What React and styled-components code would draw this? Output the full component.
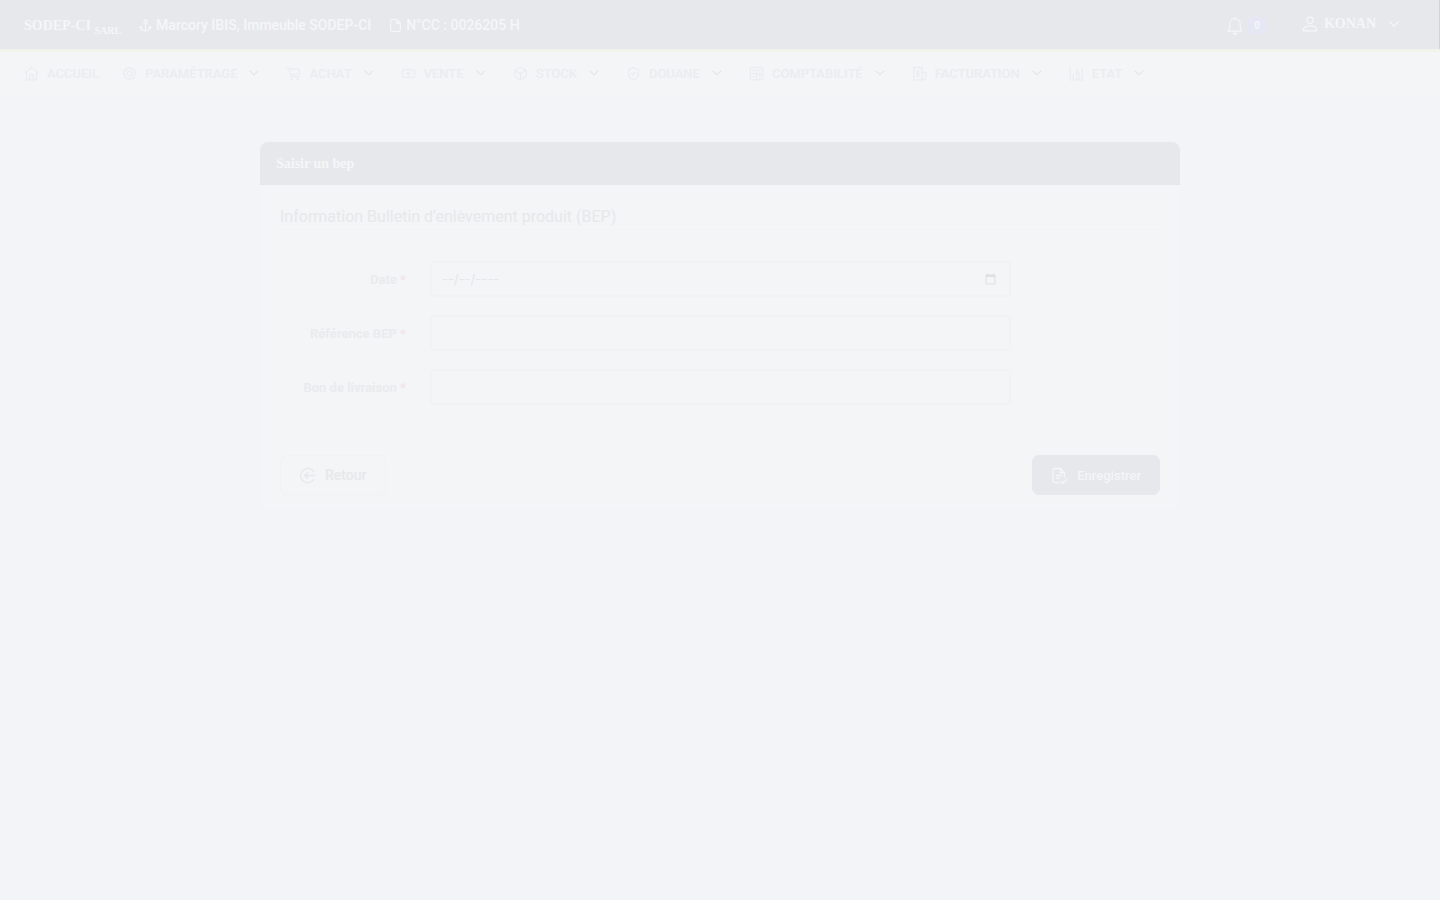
import React from "react";
import styled, { createGlobalStyle } from "styled-components";
import { BsBell, BsPerson, BsChevronDown } from "react-icons/bs";
import { Banknote, Box, ShieldCheck } from "lucide-react";

const GlobalStyle = createGlobalStyle`
  * {
    box-sizing: border-box;
  }

  body {
    margin: 0;
    background: #f2f4f8;
    color: #e9eaed;
    font-family: Roboto, "Noto Sans", sans-serif;
    font-size: 13px;
  }
`;

function HomeIcon() {
  return (
    <Glyph viewBox="0 0 24 24">
      <path d="M1 11 12 2l11 9M4 9v13h16V9M9 22v-6a3 3 0 0 1 6 0v6" />
    </Glyph>
  );
}

function GearIcon() {
  return (
    <Glyph viewBox="0 0 24 24">
      <path d="M12 2l3 2 4 1 1 4 2 3-2 3-1 4-4 1-3 2-3-2-4-1-1-4-2-3 2-3 1-4 4-1z" />
      <circle cx="12" cy="12" r="4" />
    </Glyph>
  );
}

function CartIcon() {
  return (
    <Glyph viewBox="0 0 24 24">
      <path d="M1 3h4l3 14h14M6 5h15v8l-14 1" />
      <circle cx="9" cy="21" r="1" />
      <circle cx="19" cy="21" r="1" />
    </Glyph>
  );
}

function InvoiceIcon() {
  return (
    <Glyph viewBox="0 0 24 24">
      <path d="M3 2l2 1 2-1 2 1 2-1 2 1 3-1v20H3zM16 10h6v10l-2 2H3M7 8h5M7 17h5M8 11h3v3H8z" />
    </Glyph>
  );
}

function StatIcon() {
  return (
    <Glyph viewBox="0 0 24 24">
      <path d="M2 2v20h21M7 21V12M12 21V7l4 5v9M21 21V4" />
    </Glyph>
  );
}

function CalculatorIcon() {
  return (
    <Glyph viewBox="0 0 24 24">
      <rect x="2" y="2" width="20" height="20" rx="2" />
      <path d="M12 2v20M2 12h20M7 5v4M5 7h4M15 7h4M5 17h4M15 15h4M15 19h4" />
    </Glyph>
  );
}

function AnchorIcon() {
  return (
    <Glyph viewBox="0 0 24 24" $size={13}>
      <circle cx="12" cy="5" r="3" />
      <path d="M12 8v14M3 14c0 5 4 8 9 8s9-3 9-8M1 17l2-3 3 3M18 17l3-3 2 3" />
    </Glyph>
  );
}

function FileIcon() {
  return (
    <Glyph viewBox="0 0 24 24" $size={13}>
      <path d="M3 4a3 3 0 0 1 3-3h8l7 7v12a3 3 0 0 1-3 3H6a3 3 0 0 1-3-3zM14 1v7h7" />
    </Glyph>
  );
}

function BackIcon() {
  return (
    <Glyph viewBox="0 0 24 24" $size={17}>
      <path d="M21 7a10 10 0 1 0 0 10M23 12H9M13 7l-5 5 5 5" />
    </Glyph>
  );
}

function SaveIcon() {
  return (
    <Glyph viewBox="0 0 24 24" $size={17}>
      <path d="M12 22H5a2 2 0 0 1-2-2V4a2 2 0 0 1 2-2h8l6 6v7M13 2v6h6M7 12h8M7 16h5M14 20l3 3 6-6" />
    </Glyph>
  );
}

const MENU = [
  { label: "ACCUEIL", icon: HomeIcon, plain: true },
  { label: "PARAMÉTRAGE", icon: GearIcon },
  { label: "ACHAT", icon: CartIcon },
  { label: "VENTE", icon: Banknote },
  { label: "STOCK", icon: Box },
  { label: "DOUANE", icon: ShieldCheck },
  { label: "COMPTABILITÉ", icon: CalculatorIcon },
  { label: "FACTURATION", icon: InvoiceIcon },
  { label: "ETAT", icon: StatIcon },
];

const FIELDS = [
  { id: "date", label: "Date", type: "date" },
  { id: "reference", label: "Référence BEP", type: "text" },
  { id: "livraison", label: "Bon de livraison", type: "text" },
];

function App() {
  return (
    <>
      <GlobalStyle />
      <TopBar>
        <Brand href="#">
          SODEP-CI <sub>SARL</sub>
        </Brand>
        <Info>
          <AnchorIcon />
          Marcory IBIS, Immeuble SODEP-CI
        </Info>
        <Info>
          <FileIcon />
          N°CC : 0026205 H
        </Info>
        <Bell type="button" aria-label="Notifications">
          <BsBell size={18} />
          <Badge>0</Badge>
        </Bell>
        <User type="button">
          <BsPerson size={20} />
          KONAN
          <BsChevronDown size={12} />
        </User>
      </TopBar>
      <Nav>
        {MENU.map(({ label, icon: Icon, plain }) => (
          <NavLink href="#" key={label} $plain={plain}>
            <Icon size={15} />
            {label}
            {!plain && <BsChevronDown className="chevron" size={10} />}
          </NavLink>
        ))}
      </Nav>
      <Main>
        <Card>
          <CardHeader>Saisir un bep</CardHeader>
          <CardBody>
            <Legend>Information Bulletin d'enlèvement produit (BEP)</Legend>
            {FIELDS.map(({ id, label, type }) => (
              <Row key={id}>
                <label htmlFor={id}>
                  {label} <Star>*</Star>
                </label>
                <Input id={id} type={type} />
              </Row>
            ))}
          </CardBody>
          <CardFooter>
            <Button type="button">
              <BackIcon />
              Retour
            </Button>
            <Button type="submit" $primary>
              <SaveIcon />
              Enregistrer
            </Button>
          </CardFooter>
        </Card>
      </Main>
    </>
  );
}

export default App;

const Glyph = styled.svg`
  width: ${({ $size = 15 }) => $size}px;
  height: ${({ $size = 15 }) => $size}px;
  fill: none;
  stroke: currentColor;
  stroke-width: 2;
`;

const TopBar = styled.header`
  display: flex;
  align-items: center;
  height: 49px;
  padding: 0 39px 0 24px;
  border-right: 1px solid #d3d4d9;
  background: #e7e8ec;
  color: #f5f6f8;
`;

const Brand = styled.a`
  margin-right: 18px;
  padding-top: 2px;
  color: inherit;
  font-family: "Liberation Serif", serif;
  font-size: 14px;
  font-weight: 700;
  line-height: 20px;
  text-decoration: none;

  sub {
    font-size: 10px;
    line-height: 1;
  }
`;

const Info = styled.span`
  display: flex;
  align-items: center;
  gap: 4px;
  margin-right: 18px;
  padding-top: 1px;
  font-size: 14px;
  font-weight: 500;
`;

const Bell = styled.button`
  display: flex;
  align-items: center;
  gap: 4px;
  margin-left: auto;
  padding: 2px 0 0;
  border: 0;
  background: none;
  color: inherit;
`;

const Badge = styled.span`
  padding: 0 6px;
  border-radius: 3px;
  background: #e5e8f4;
  font-size: 10px;
  font-weight: 700;
  line-height: 17px;
`;

const User = styled.button`
  display: flex;
  align-items: center;
  gap: 4px;
  margin-left: 34px;
  padding: 0 0 2px;
  border: 0;
  background: none;
  color: inherit;
  font-family: "Liberation Serif", serif;
  font-size: 14px;
  font-weight: 700;

  svg:last-child {
    margin-left: 8px;
    stroke: currentColor;
    stroke-width: 1;
  }
`;

const Nav = styled.nav`
  display: flex;
  align-items: center;
  gap: 23px;
  height: 47px;
  padding: 0 24px 2px;
  border-top: 3px solid #f2f3eb;
  background: #f3f5f7;
`;

const NavLink = styled.a`
  display: flex;
  align-items: center;
  gap: 8px;
  padding-right: ${({ $plain }) => ($plain ? 0 : 4)}px;
  color: #ebecef;
  font-weight: 500;
  text-decoration: none;

  .chevron {
    margin-left: 4px;
    color: #e3e4e7;
    stroke: currentColor;
    stroke-width: 1;
  }
`;

const Main = styled.main`
  display: flex;
  justify-content: center;
  padding: 46px 24px;
`;

const Card = styled.form`
  flex: 1;
  max-width: 920px;
  border-radius: 8px;
  background: #f3f5f7;
  overflow: hidden;
`;

const CardHeader = styled.div`
  padding: 11px 16px;
  background: #e7e8ec;
  color: #f5f6f8;
  font-family: "Liberation Serif", serif;
  font-size: 14px;
  font-weight: 700;
  line-height: 21px;
`;

const CardBody = styled.div`
  padding: 20px 20px 24px;
`;

const Legend = styled.h2`
  margin: 0 0 31px;
  border-bottom: 1px solid #f2f3f5;
  color: #e7e8ea;
  font-size: 16px;
  font-weight: 400;
  line-height: 24px;
`;

const Row = styled.div`
  display: grid;
  grid-template-columns: 126px 66%;
  align-items: center;
  column-gap: 24px;
  margin-bottom: 18px;

  label {
    color: #eaebed;
    font-weight: 700;
    text-align: right;
  }
`;

const Star = styled.span`
  color: #f6e3e7;
`;

const Input = styled.input`
  width: 100%;
  height: 36px;
  padding: 0 10px;
  border: 2px solid #f0f2f4;
  border-radius: 4px;
  background: transparent;
  color: #e5e6e9;
  font-family: inherit;
  font-size: 14px;

  &[type="date"] {
    display: flex;
    align-items: center;
    font-family: Inter, sans-serif;
    font-size: 13px;
  }

  &[type="date"]::before {
    content: "--/--/----";
    flex: 1;
    white-space: nowrap;
  }

  &::-webkit-datetime-edit {
    display: none;
  }

  &::-webkit-calendar-picker-indicator {
    opacity: 0.08;
  }
`;

const CardFooter = styled.div`
  display: flex;
  justify-content: space-between;
  padding: 8px 20px 15px;
`;

const Button = styled.button`
  display: flex;
  align-items: center;
  gap: 9px;
  height: 40px;
  padding: 0 18px;
  border: 1px solid ${({ $primary }) => ($primary ? "#e7e8ec" : "#f0f2f4")};
  border-radius: 7px;
  background: ${({ $primary }) => ($primary ? "#e7e8ec" : "#f3f5f7")};
  color: ${({ $primary }) => ($primary ? "#f3f5f7" : "#e7e8ea")};
  font-family: inherit;
  font-size: ${({ $primary }) => ($primary ? 13 : 14)}px;
  font-weight: 500;
`;
